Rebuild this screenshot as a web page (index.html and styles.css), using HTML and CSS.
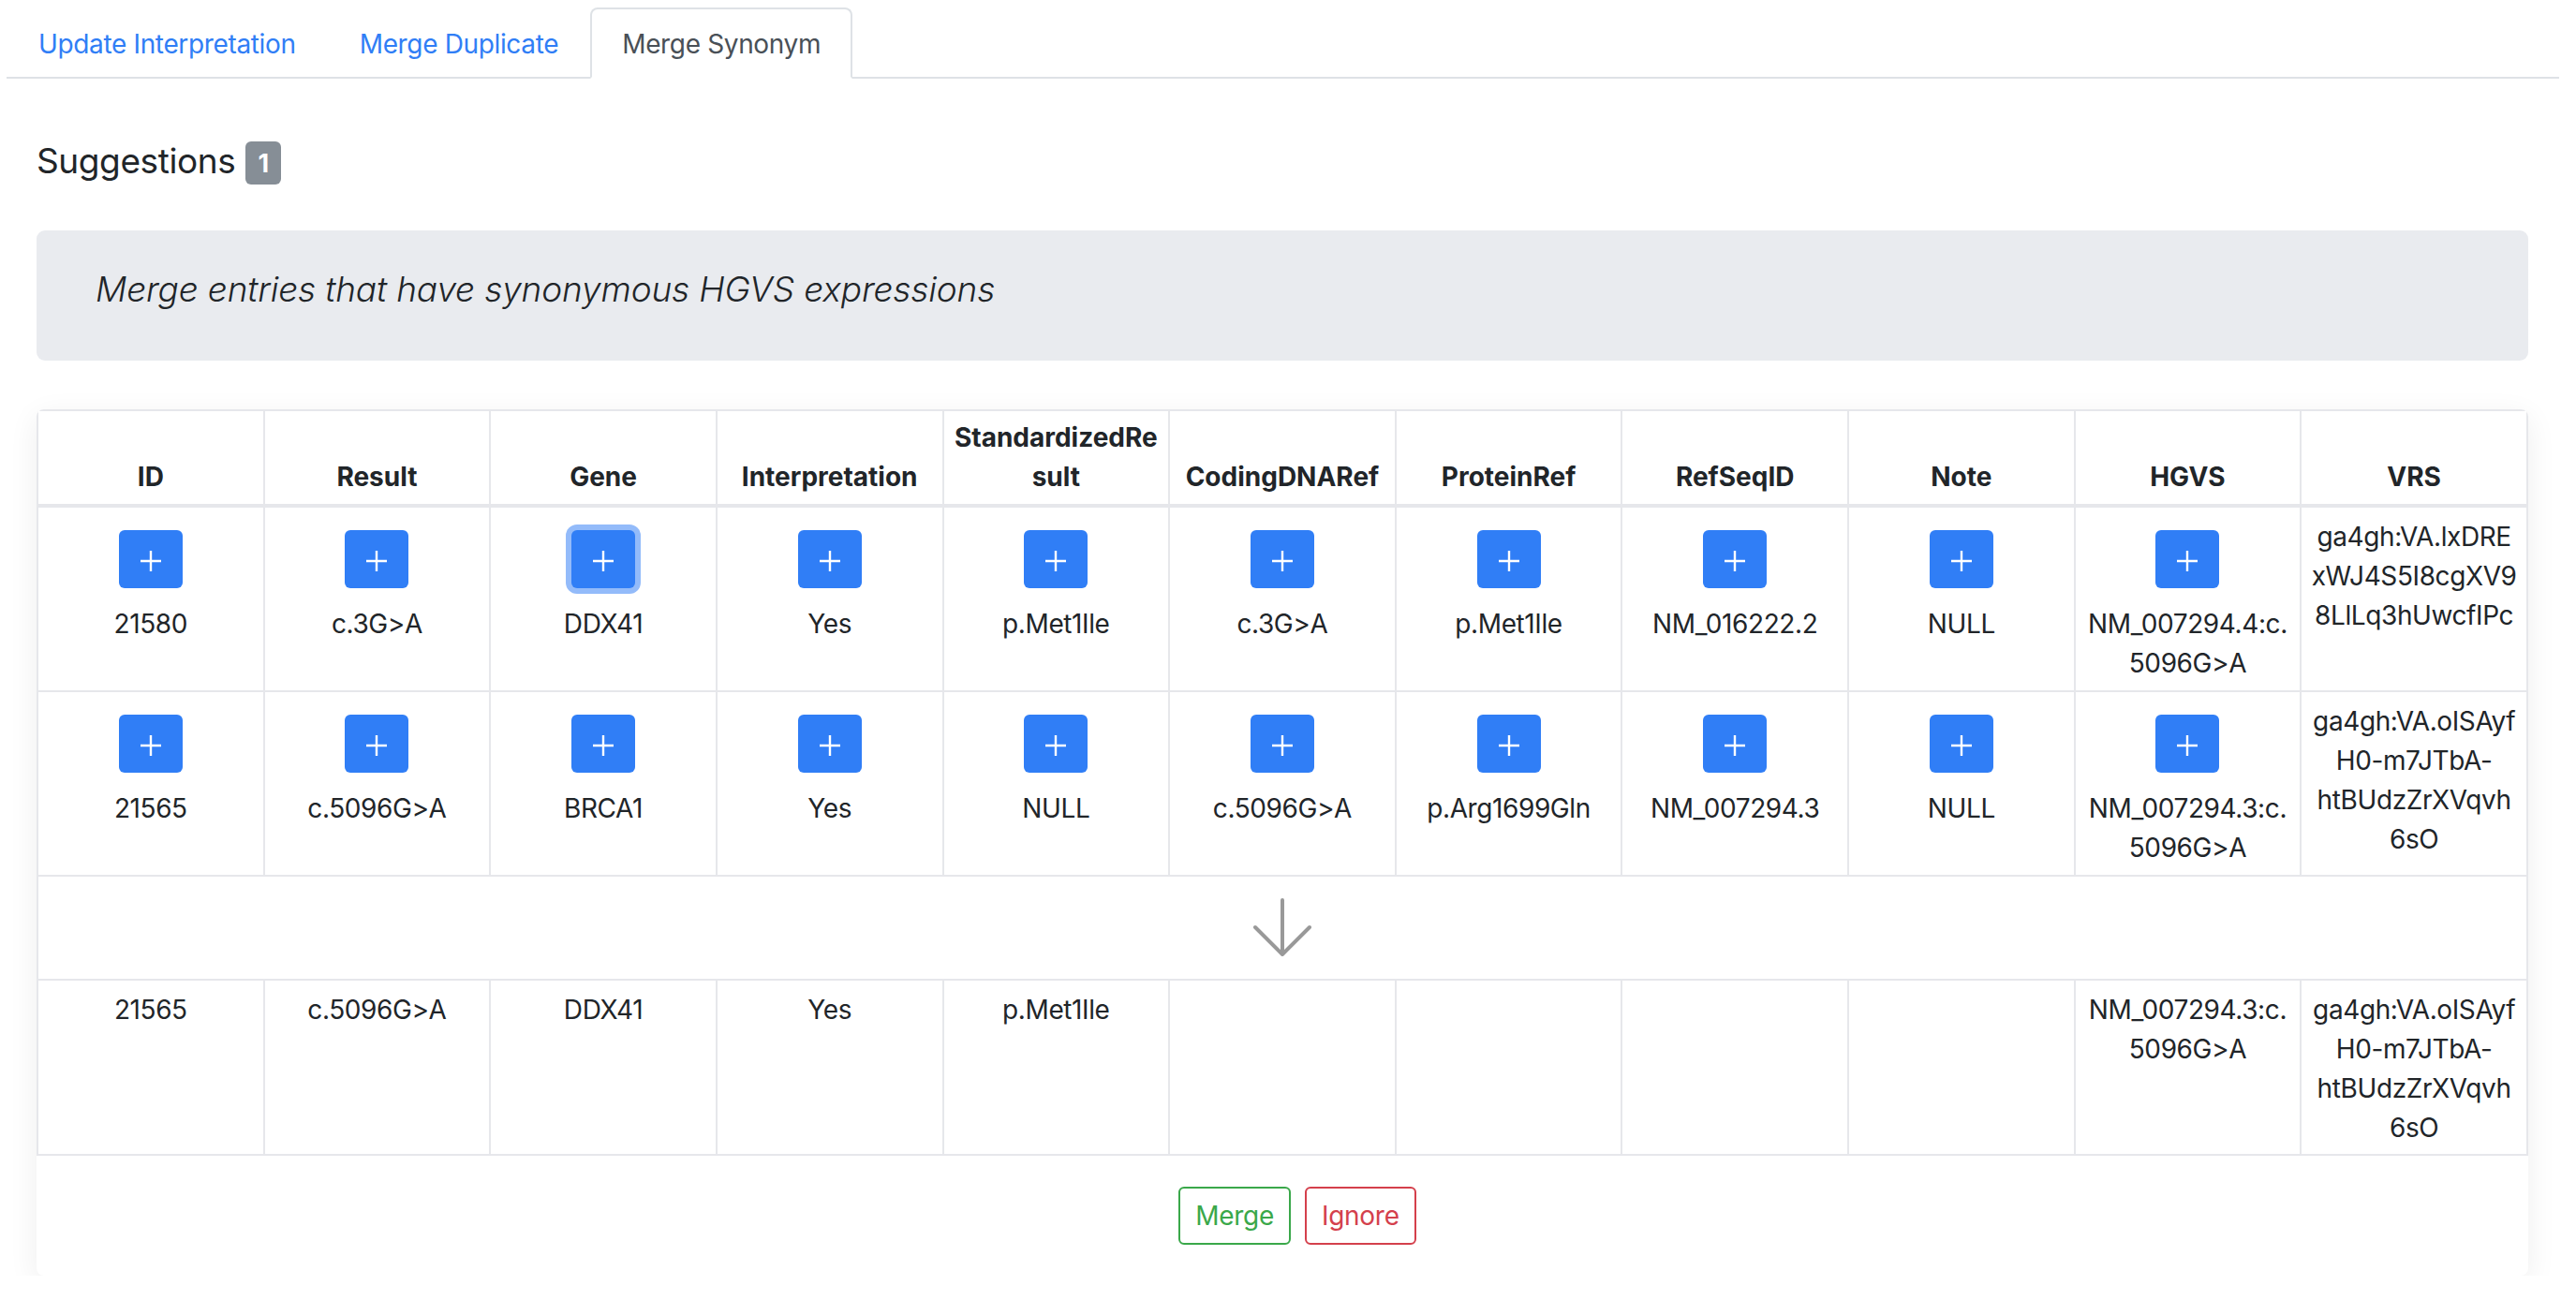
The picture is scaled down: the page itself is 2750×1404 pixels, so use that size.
FILE: index.html
```html
<!DOCTYPE html>
<html lang="en">
<head>
<meta charset="utf-8">
<title>Merge Synonym</title>
<link rel="stylesheet" href="styles.css">
</head>
<body>
<ul class="tabs">
  <li><a class="tab" href="#">Update Interpretation</a></li>
  <li><a class="tab" href="#">Merge Duplicate</a></li>
  <li><a class="tab active" href="#">Merge Synonym</a></li>
</ul>

<main class="content">
  <h4 class="heading">Suggestions <span class="badge">1</span></h4>

  <div class="jumbo">Merge entries that have synonymous HGVS expressions</div>

  <section class="card">
    <table class="grid">
      <thead>
        <tr>
          <th>ID</th><th>Result</th><th>Gene</th><th>Interpretation</th><th>StandardizedResult</th><th>CodingDNARef</th><th>ProteinRef</th><th>RefSeqID</th><th>Note</th><th>HGVS</th><th>VRS</th>
        </tr>
      </thead>
      <tbody>
        <tr>
          <td><div class="add-wrap"><button class="add"><svg viewBox="0 0 22 22" width="22" height="22"><path d="M11 0V22M0 11H22"/></svg></button></div>21580</td>
          <td><div class="add-wrap"><button class="add"><svg viewBox="0 0 22 22" width="22" height="22"><path d="M11 0V22M0 11H22"/></svg></button></div>c.3G&gt;A</td>
          <td><div class="add-wrap"><button class="add focus"><svg viewBox="0 0 22 22" width="22" height="22"><path d="M11 0V22M0 11H22"/></svg></button></div>DDX41</td>
          <td><div class="add-wrap"><button class="add"><svg viewBox="0 0 22 22" width="22" height="22"><path d="M11 0V22M0 11H22"/></svg></button></div>Yes</td>
          <td><div class="add-wrap"><button class="add"><svg viewBox="0 0 22 22" width="22" height="22"><path d="M11 0V22M0 11H22"/></svg></button></div>p.Met1Ile</td>
          <td><div class="add-wrap"><button class="add"><svg viewBox="0 0 22 22" width="22" height="22"><path d="M11 0V22M0 11H22"/></svg></button></div>c.3G&gt;A</td>
          <td><div class="add-wrap"><button class="add"><svg viewBox="0 0 22 22" width="22" height="22"><path d="M11 0V22M0 11H22"/></svg></button></div>p.Met1Ile</td>
          <td><div class="add-wrap"><button class="add"><svg viewBox="0 0 22 22" width="22" height="22"><path d="M11 0V22M0 11H22"/></svg></button></div>NM_016222.2</td>
          <td><div class="add-wrap"><button class="add"><svg viewBox="0 0 22 22" width="22" height="22"><path d="M11 0V22M0 11H22"/></svg></button></div>NULL</td>
          <td><div class="add-wrap"><button class="add"><svg viewBox="0 0 22 22" width="22" height="22"><path d="M11 0V22M0 11H22"/></svg></button></div>NM_007294.4:c.5096G&gt;A</td>
          <td>ga4gh:VA.lxDRExWJ4S5I8cgXV98LlLq3hUwcfIPc</td>
        </tr>
        <tr>
          <td><div class="add-wrap"><button class="add"><svg viewBox="0 0 22 22" width="22" height="22"><path d="M11 0V22M0 11H22"/></svg></button></div>21565</td>
          <td><div class="add-wrap"><button class="add"><svg viewBox="0 0 22 22" width="22" height="22"><path d="M11 0V22M0 11H22"/></svg></button></div>c.5096G&gt;A</td>
          <td><div class="add-wrap"><button class="add"><svg viewBox="0 0 22 22" width="22" height="22"><path d="M11 0V22M0 11H22"/></svg></button></div>BRCA1</td>
          <td><div class="add-wrap"><button class="add"><svg viewBox="0 0 22 22" width="22" height="22"><path d="M11 0V22M0 11H22"/></svg></button></div>Yes</td>
          <td><div class="add-wrap"><button class="add"><svg viewBox="0 0 22 22" width="22" height="22"><path d="M11 0V22M0 11H22"/></svg></button></div>NULL</td>
          <td><div class="add-wrap"><button class="add"><svg viewBox="0 0 22 22" width="22" height="22"><path d="M11 0V22M0 11H22"/></svg></button></div>c.5096G&gt;A</td>
          <td><div class="add-wrap"><button class="add"><svg viewBox="0 0 22 22" width="22" height="22"><path d="M11 0V22M0 11H22"/></svg></button></div>p.Arg1699Gln</td>
          <td><div class="add-wrap"><button class="add"><svg viewBox="0 0 22 22" width="22" height="22"><path d="M11 0V22M0 11H22"/></svg></button></div>NM_007294.3</td>
          <td><div class="add-wrap"><button class="add"><svg viewBox="0 0 22 22" width="22" height="22"><path d="M11 0V22M0 11H22"/></svg></button></div>NULL</td>
          <td><div class="add-wrap"><button class="add"><svg viewBox="0 0 22 22" width="22" height="22"><path d="M11 0V22M0 11H22"/></svg></button></div>NM_007294.3:c.5096G&gt;A</td>
          <td>ga4gh:VA.oISAyfH0-m7JTbA-htBUdzZrXVqvh6sO</td>
        </tr>
        <tr>
          <td class="arrow-cell" colspan="11">
            <svg class="arrow" viewBox="0 0 62 62" width="62" height="62"><path d="M31 2V60M2 31L31 60L60 31"/></svg>
          </td>
        </tr>
        <tr class="result-row">
          <td>21565</td>
          <td>c.5096G&gt;A</td>
          <td>DDX41</td>
          <td>Yes</td>
          <td>p.Met1Ile</td>
          <td></td>
          <td></td>
          <td></td>
          <td></td>
          <td>NM_007294.3:c.5096G&gt;A</td>
          <td>ga4gh:VA.oISAyfH0-m7JTbA-htBUdzZrXVqvh6sO</td>
        </tr>
      </tbody>
    </table>
    <div class="actions">
      <button class="btn btn-merge">Merge</button>
      <button class="btn btn-ignore">Ignore</button>
    </div>
  </section>
</main>
</body>
</html>
```

FILE: styles.css
```css
* { box-sizing: border-box; }

html, body {
  margin: 0;
  padding: 0;
  background: #ffffff;
}

body {
  font-family: Inter, "Liberation Sans", sans-serif;
  font-size: 28px;
  line-height: 42px;
  color: #212529;
  letter-spacing: -0.4px;
}

.tabs {
  display: flex;
  list-style: none;
  margin: 8px 18px 0 7px;
  padding: 0;
  border-bottom: 2px solid #dee2e6;
}

.tab {
  display: block;
  padding: 16px 32px 14px;
  border: 2px solid transparent;
  border-radius: 8px 8px 0 0;
  margin-bottom: -2px;
  color: #307ef6;
  text-decoration: none;
  letter-spacing: -0.35px;
}

.tab.active {
  color: #495057;
  background: #ffffff;
  border-color: #dee2e6 #dee2e6 #ffffff;
}

.content {
  margin: 0 51px 0 39px;
}

.heading {
  display: flex;
  align-items: flex-start;
  gap: 11px;
  margin: 64px 0 49px;
  font-size: 37px;
  line-height: 48px;
  font-weight: 400;
}

.badge {
  display: inline-flex;
  align-items: center;
  justify-content: center;
  width: 38px;
  height: 46px;
  margin-top: 3px;
  border-radius: 6px;
  background: #868e96;
  color: #ffffff;
  font-size: 27px;
  font-weight: 700;
  line-height: 1;
  letter-spacing: 0;
}

.jumbo {
  margin: 0 0 52px;
  padding: 36px 63px 49px;
  border-radius: 9px;
  background: #e9ebef;
  font-size: 37px;
  line-height: 54px;
  font-style: italic;
  font-weight: 300;
  letter-spacing: -0.15px;
}

.card {
  background: #ffffff;
  border-radius: 8px;
  box-shadow: 0 8px 32px rgba(0, 0, 0, 0.07);
  overflow: hidden;
}

.grid {
  width: 100%;
  border-collapse: collapse;
  table-layout: fixed;
}

.grid th,
.grid td {
  border: 2px solid #e6e7eb;
  text-align: center;
  overflow-wrap: anywhere;
}

.grid th {
  vertical-align: bottom;
  padding: 7px 9px 8px;
  border-bottom-width: 4px;
  font-weight: 700;
  letter-spacing: 0;
}

.grid td {
  vertical-align: top;
  padding: 10px 9px 8px;
}

.grid .result-row td {
  padding-bottom: 7px;
}

.add-wrap {
  height: 62px;
  margin: 14px 0 17px;
}

.add {
  display: inline-flex;
  align-items: center;
  justify-content: center;
  width: 68px;
  height: 62px;
  padding: 4px 0 0;
  border: none;
  border-radius: 6px;
  background: #307ef6;
}

.add svg path {
  stroke: #ffffff;
  stroke-width: 2.4;
  fill: none;
}

.add.focus {
  box-shadow: 0 0 0 6px #93bbfa;
}

.grid td.arrow-cell {
  padding: 23px 0 24px;
  vertical-align: middle;
}

.arrow {
  display: block;
  margin: 0 auto;
}

.arrow path {
  fill: none;
  stroke: #999999;
  stroke-width: 4;
  stroke-linecap: round;
  stroke-linejoin: round;
}

.actions {
  display: flex;
  justify-content: center;
  gap: 15px;
  padding: 33px 0 33px 32px;
}

.btn {
  font-family: inherit;
  font-size: 28px;
  line-height: 42px;
  letter-spacing: -0.3px;
  padding: 8px 16px;
  border: 2px solid;
  border-radius: 6px;
  background: #ffffff;
}

.btn-merge {
  color: #3aa84a;
  border-color: #3aa84a;
}

.btn-ignore {
  color: #d4404c;
  border-color: #d4404c;
}
```
